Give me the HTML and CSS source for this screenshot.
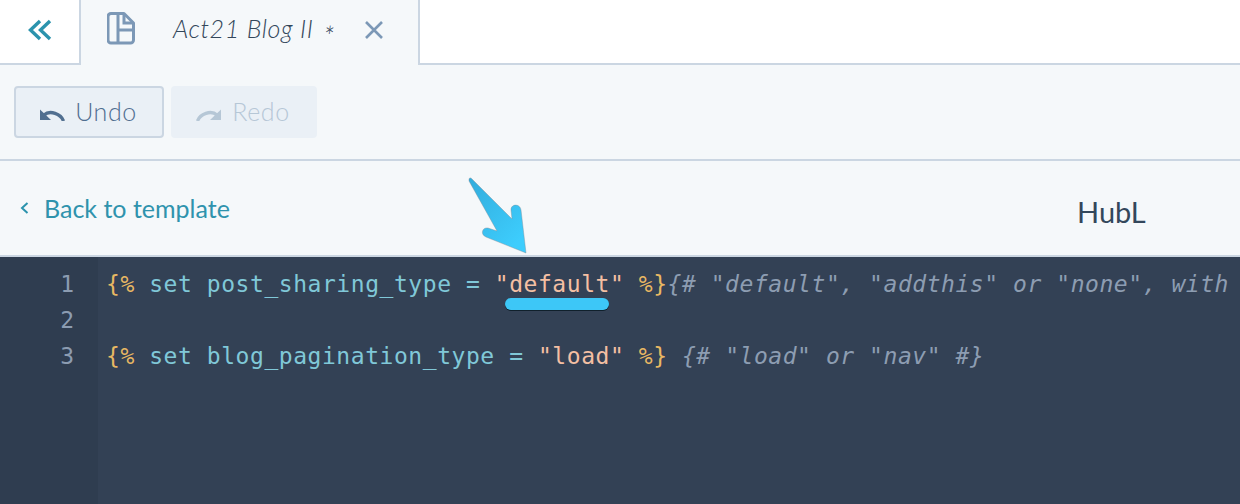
FILE: index.html
```html
<!DOCTYPE html>
<html lang="en">
<head>
<meta charset="utf-8">
<title>Act21 Blog II</title>
<link rel="stylesheet" href="styles.css">
</head>
<body>
<header class="tabbar">
  <button class="collapse" aria-label="Collapse">
    <svg width="26" height="24" viewBox="0 0 26 24" fill="none" stroke="#2b93ad" stroke-width="3.400"><path d="M13 3 3.500 12l9.500 9"/><path d="M23 3 13.500 12l9.500 9"/></svg>
  </button>
  <div class="tab">
    <svg class="tab-icon" width="28" height="33" viewBox="0 0 28 33" fill="none" stroke="#7c98b6" stroke-width="3"><path d="M4 1.500h13l9.500 9.500v17a3 3 0 0 1-3 3H4a3 3 0 0 1-3-3V4.500a3 3 0 0 1 3-3Z" stroke-linejoin="round"/><path d="M11 2v28M11 18h15M17 2v9h9"/></svg>
    <span class="tab-title">Act21 Blog II</span>
    <span class="tab-star">*</span>
    <svg class="tab-close" width="20" height="20" viewBox="0 0 20 20" stroke="#7c98b6" stroke-width="2.600"><path d="M2 2l16 16M18 2 2 18"/></svg>
  </div>
  <div class="tabbar-rest"></div>
</header>
<section class="toolbar">
  <button class="btn">
    <svg width="26" height="14" viewBox="0 0 26 14" fill="none" stroke="#516f90" stroke-width="3.400"><path d="M24.500 14C22 7 11 2.500 5 8"/><path d="M1 2.500v10.500h11" fill="#516f90" stroke="none"/></svg>
    <span>Undo</span>
  </button>
  <button class="btn btn-disabled">
    <svg width="26" height="14" viewBox="0 0 26 14" fill="none" stroke="#b6c7d6" stroke-width="3.400"><path d="M1.500 14C4 7 15 2.500 21 8"/><path d="M25 2.500v10.500h-11" fill="#b6c7d6" stroke="none"/></svg>
    <span>Redo</span>
  </button>
</section>
<section class="subbar">
  <a class="back"><svg width="9" height="14" viewBox="0 0 9 14" fill="none" stroke="#2b93ad" stroke-width="2"><path d="M7.500 2 2 7l5.500 5"/></svg><span>Back to template</span></a>
  <span class="lang">HubL</span>
  <svg class="arrow" width="64" height="80" viewBox="0 0 64 80">
    <defs><linearGradient id="arrowfill" x1="0.100" y1="0" x2="0.800" y2="0.900"><stop offset="0" stop-color="#33aede"/><stop offset="1" stop-color="#3dcdfd"/></linearGradient></defs>
    <path d="M1 2c.5-1.500 2-1.500 3 0L44 42l-1-9c-.5-6 9-7 10 0l5 43-40-16c-6-2.500-4-10 2-9l9 3L1 4Z" fill="url(#arrowfill)" stroke="#7d8a96" stroke-width=".4"/>
  </svg>
</section>
<main class="editor">
  <div class="gutter">
    <div>1</div><div>2</div><div>3</div>
  </div>
  <div class="code">
    <div class="line"><span class="tag">{%</span> <span class="kw">set post_sharing_type =</span> <span class="str mark">"default"<i class="underline"></i></span> <span class="tag">%}</span><span class="cm">{# "default", "addthis" or "none", with</span></div>
    <div class="line"></div>
    <div class="line"><span class="tag">{%</span> <span class="kw">set blog_pagination_type =</span> <span class="str">"load"</span> <span class="tag">%}</span> <span class="cm">{# "load" or "nav" #}</span></div>
  </div>
</main>
</body>
</html>
```
FILE: styles.css
```css
* { box-sizing: border-box; }
html, body { margin: 0; height: 100%; }
body {
  width: 1240px;
  height: 504px;
  overflow: hidden;
  background: #f5f8fa;
  font-family: Lato, "Open Sans", sans-serif;
  display: flex;
  flex-direction: column;
}
button { font: inherit; padding: 0; }
.tabbar { display: flex; height: 65px; background: #fff; flex: none; }
.collapse {
  width: 79px;
  border: 0;
  border-bottom: 2px solid #cbd6e2;
  background: #fff;
  display: flex;
  align-items: center;
  justify-content: center;
  padding: 0 0 4px 0;
}
.tab {
  width: 341px;
  background: #f5f8fa;
  border-left: 2px solid #cbd6e2;
  border-right: 2px solid #cbd6e2;
  display: flex;
  align-items: center;
  padding: 0 0 6px 26px;
  color: #425b76;
}
.tab-icon { margin-top: -2px; }
.tab-title { margin: -3px 0 0 38px; font-size: 25px; font-style: italic; font-weight: 300; letter-spacing: .6px; color: #33475b; white-space: nowrap; }
.tab-star { margin: 12px 0 0 10px; font-size: 27px; font-style: italic; font-weight: 300; color: #33475b; }
.tab-close { margin-left: 30px; }
.tabbar-rest { flex: 1; border-bottom: 2px solid #cbd6e2; }
.toolbar {
  height: 96px;
  flex: none;
  display: flex;
  align-items: flex-start;
  gap: 7px;
  padding: 21px 14px 0;
  border-bottom: 2px solid #cbd6e2;
}
.btn {
  height: 52px;
  width: 150px;
  display: flex;
  align-items: center;
  justify-content: center;
  gap: 10px;
  background: #eaf0f6;
  border: 2px solid #cbd6e2;
  border-radius: 4px;
  font-size: 25px;
  font-weight: 300;
  letter-spacing: .6px;
  color: #506e91;
  padding: 0 2px 2px 0;
}
.btn svg { margin-top: 5px; }
.btn-disabled { width: 146px; border-color: #eaf0f6; color: #b6c7d6; }
.subbar {
  position: relative;
  height: 96px;
  flex: none;
  display: flex;
  align-items: flex-start;
  border-bottom: 2px solid #cbd6e2;
}
.back {
  margin: 32px 0 0 20px;
  display: flex;
  align-items: center;
  gap: 15px;
  font-size: 25px;
  color: #2f93ad;
  white-space: nowrap;
}
.lang { position: absolute; left: 1077px; top: 33px; font-size: 29px; color: #33475b; }
.arrow { position: absolute; left: 468px; top: 16px; }
.editor {
  flex: 1;
  display: flex;
  background: #334155;
  font-family: "DejaVu Sans Mono", monospace;
  font-size: 23px;
  line-height: 36px;
  overflow: hidden;
}
.gutter {
  width: 98px;
  flex: none;
  padding: 9px 24px 0 0;
  background: #2f3d50;
  color: #8c9cb1;
  text-align: right;
}
.gutter div { height: 36px; }
.code { padding: 9px 0 0 8px; letter-spacing: .55px; }
.line { height: 36px; white-space: pre; }
.tag { color: #e8b863; }
.kw { color: #80c8d8; }
.str { color: #f4bfa3; }
.mark { position: relative; }
.underline {
  position: absolute;
  left: 10px;
  top: 27px;
  width: 104px;
  height: 12px;
  border-radius: 6px;
  background: #3dc7f7;
  box-shadow: 0 1px 0 #10202c;
}
.cm { color: #8d9db2; font-style: italic; }
```
